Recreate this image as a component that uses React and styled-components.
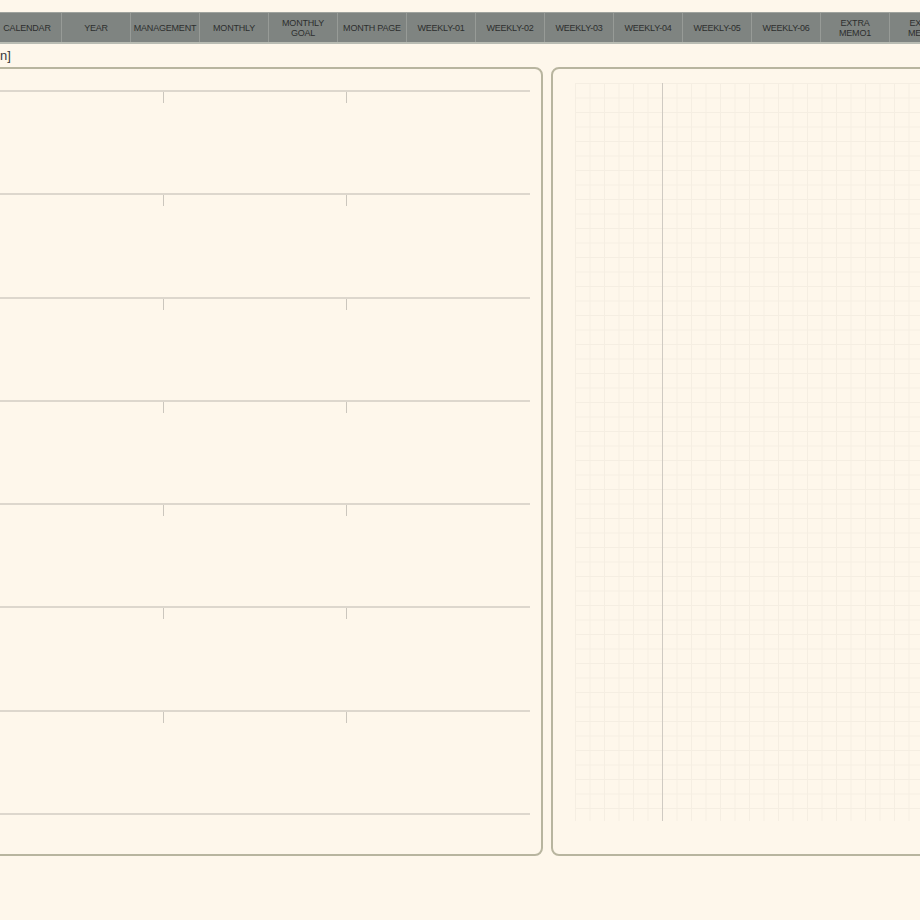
import React from 'react'
import styled, { createGlobalStyle } from 'styled-components'

const GlobalStyle = createGlobalStyle`
    body {
        margin: 0;
        background-color: #fef7eb;
        overflow: hidden;
    }
`

const Page = styled.div`
    width: 920px;
    height: 920px;
    overflow: hidden;
    padding-top: 12px;
    box-sizing: border-box;
    font-family: "Liberation Sans", Arial, sans-serif;
`

const TabBar = styled.nav`
    display: flex;
    width: max-content;
    margin-left: -7px;
    height: 29px;
    background-color: #7f8481;
    border-top: 1px solid #9fa39e;
    border-bottom: 2px solid #b9bcb3;
`

const Tab = styled.div`
    flex: none;
    width: 68px;
    border-right: 1px solid #979b97;
    display: flex;
    align-items: center;
    justify-content: center;
    text-align: center;
    font-size: 9px;
    line-height: 10px;
    letter-spacing: -0.2px;
    color: #2d2f2e;
    white-space: pre-line;
`

const Caption = styled.div`
    height: 23px;
    display: flex;
    align-items: center;
    font-size: 13px;
    color: #3a3a3a;
`

const Sheets = styled.div`
    display: flex;
    gap: 8px;
    margin-left: -34px;
    height: 789px;
`

const Sheet = styled.section`
    flex: none;
    box-sizing: border-box;
    width: ${p => p.$width}px;
    height: 100%;
    border: 2px solid #b8b59f;
    border-radius: 8px;
    padding: ${p => p.$padding};
`

const Rows = styled.div`
    display: flex;
    flex-direction: column;
    border-bottom: 2px solid #ddd7cd;
`

const Row = styled.div`
    height: 103.3px;
    box-sizing: border-box;
    border-top: 2px solid #ddd7cd;
    display: grid;
    grid-template-columns: repeat(3, 1fr);
`

const Cell = styled.div`
    border-left: ${p => (p.$tick ? '1px solid #cbc6bd' : 'none')};
    height: 11px;
`

const Grid = styled.div`
    width: 100%;
    height: 738px;
    background-image:
        linear-gradient(to right, transparent 87px, #cfcac2 87px, #cfcac2 88px, transparent 88px),
        linear-gradient(to right, #f5eee2 1px, transparent 1px),
        linear-gradient(to bottom, #f5eee2 1px, transparent 1px);
    background-size: 100% 100%, 14.5px 14.5px, 14.5px 14.5px;
    background-repeat: no-repeat, repeat, repeat;
`

const tabs = [
    'CALENDAR', 'YEAR', 'MANAGEMENT', 'MONTHLY', 'MONTHLY\nGOAL', 'MONTH PAGE',
    'WEEKLY-01', 'WEEKLY-02', 'WEEKLY-03', 'WEEKLY-04', 'WEEKLY-05', 'WEEKLY-06',
    'EXTRA\nMEMO1', 'EXTRA\nMEMO2',
]

export default function App() {
    return (
        <Page>
            <GlobalStyle />
            <TabBar>
                {tabs.map(t => <Tab key={t}>{t}</Tab>)}
            </TabBar>
            <Caption>n]</Caption>
            <Sheets>
                <Sheet $width={577} $padding="21px 11px 0 11px">
                    <Rows>
                        {Array.from({ length: 7 }, (_, i) => (
                            <Row key={i}>
                                <Cell />
                                <Cell $tick />
                                <Cell $tick />
                            </Row>
                        ))}
                    </Rows>
                </Sheet>
                <Sheet $width={500} $padding="14px 0 0 22px">
                    <Grid />
                </Sheet>
            </Sheets>
        </Page>
    )
}
